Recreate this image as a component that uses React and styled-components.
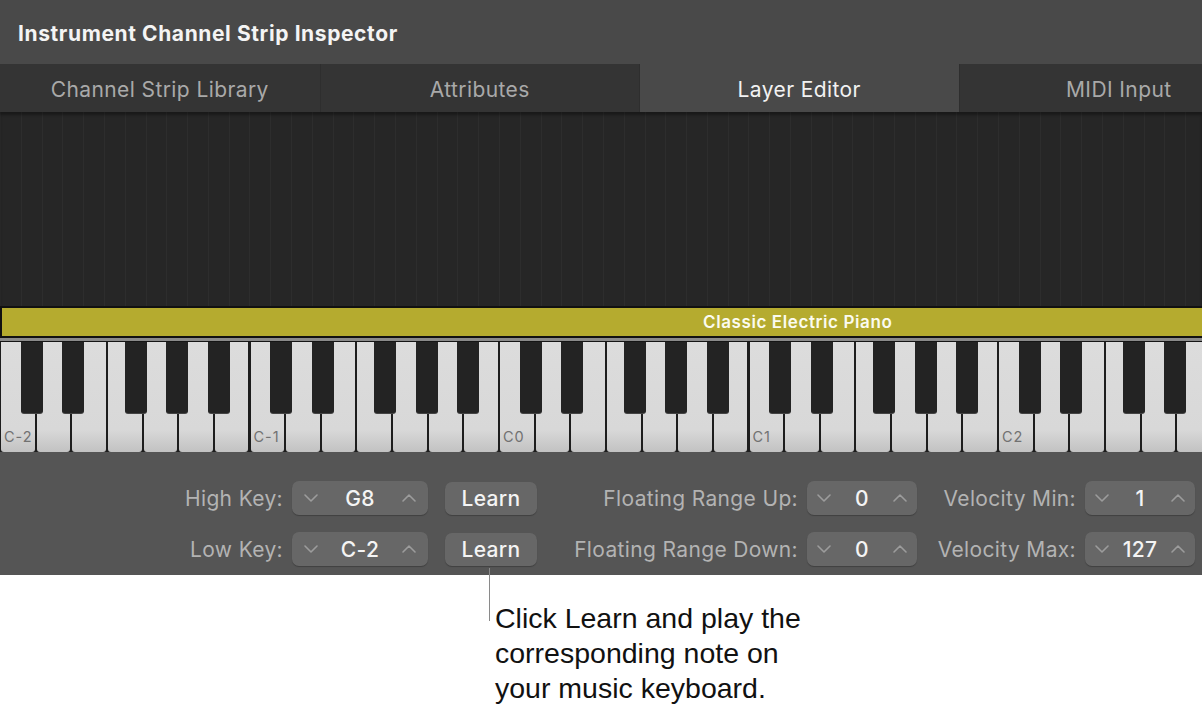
import React from "react";
import styled, { createGlobalStyle } from "styled-components";

const GlobalStyle = createGlobalStyle`
  * { box-sizing: border-box; }
  html, body, #root { margin: 0; padding: 0; }
  body {
    background: #fff;
    width: 1202px;
    height: 716px;
    overflow: hidden;
    font-family: Inter, "Noto Sans", sans-serif;
  }
`;

const TABS = ["Channel Strip Library", "Attributes", "Layer Editor", "MIDI Input"];
const OCTAVES = ["C-2", "C-1", "C0", "C1", "C2"];
const BLACK_KEYS = [1, 3, 6, 8, 10]; // semitone offsets
const SEMI = 249.5 / 12;

function Chevron({ up }) {
  return (
    <svg width="14" height="8" viewBox="0 0 14 8">
      <polyline
        points={up ? "1,7 7,1 13,7" : "1,1 7,7 13,1"}
        fill="none"
        stroke="#9c9c9c"
        strokeWidth="1.6"
        strokeLinecap="round"
        strokeLinejoin="round"
      />
    </svg>
  );
}

function Stepper({ value, wide }) {
  return (
    <StepBox $wide={wide}>
      <Chevron />
      <StepValue>{value}</StepValue>
      <Chevron up />
    </StepBox>
  );
}

export default function App() {
  return (
    <>
      <GlobalStyle />
      <Inspector>
        <TitleBar>Instrument Channel Strip Inspector</TitleBar>
        <TabBar>
          {TABS.map((t) => (
            <Tab key={t} $active={t === "Layer Editor"}>{t}</Tab>
          ))}
        </TabBar>

        <LayerArea />
        <LayerBar>
          <LayerName>Classic Electric Piano</LayerName>
        </LayerBar>
        <KeyDivider />

        <Keyboard>
          {OCTAVES.map((name) => (
            <Octave key={name}>
              {Array.from({ length: 7 }).map((_, i) => (
                <WhiteKey key={i}>{i === 0 && <KeyLabel>{name}</KeyLabel>}</WhiteKey>
              ))}
              {BLACK_KEYS.map((s) => (
                <BlackKey key={s} style={{ left: s * SEMI }} />
              ))}
            </Octave>
          ))}
        </Keyboard>

        <Controls>
          <Label>High Key:</Label>
          <Stepper value="G8" wide />
          <LearnButton>Learn</LearnButton>
          <Label>Floating Range Up:</Label>
          <Stepper value="0" />
          <Label>Velocity Min:</Label>
          <Stepper value="1" />

          <Label>Low Key:</Label>
          <Stepper value="C-2" wide />
          <LearnButton>Learn</LearnButton>
          <Label>Floating Range Down:</Label>
          <Stepper value="0" />
          <Label>Velocity Max:</Label>
          <Stepper value="127" />
        </Controls>
      </Inspector>

      <Callout>
        <CalloutLine />
        <CalloutText>
          Click Learn and play the
          <br />
          corresponding note on
          <br />
          your music keyboard.
        </CalloutText>
      </Callout>
    </>
  );
}

/* ===== styled ===== */
const Inspector = styled.div`
  width: 1202px;
  background: #555555;
  overflow: hidden;
`;

const TitleBar = styled.div`
  height: 64px;
  background: #494949;
  color: #f4f4f4;
  font-size: 21px;
  font-weight: 700;
  letter-spacing: 0.6px;
  display: flex;
  align-items: center;
  padding: 2px 18px 0;
`;

const TabBar = styled.div`
  height: 48px;
  display: flex;
  background: #343434;
  box-shadow: inset 0 1px 0 #2c2c2c;
  overflow: hidden;
`;

const Tab = styled.div`
  flex: 0 0 319.5px;
  display: flex;
  align-items: center;
  justify-content: center;
  font-size: 21px;
  letter-spacing: 0.4px;
  padding-top: 2px;
  color: ${(p) => (p.$active ? "#f2f2f2" : "#a9a9a9")};
  background: ${(p) => (p.$active ? "#494949" : "#343434")};
  border-left: 1px solid #2e2e2e;
  &:first-child { border-left: none; }
`;

const LayerArea = styled.div`
  height: 194px;
  background-color: #262626;
  background-image: repeating-linear-gradient(
    90deg,
    #2d2d2d 0px,
    #2d2d2d 1px,
    transparent 1px,
    transparent ${SEMI}px
  );
  box-shadow: inset 0 3px 3px rgba(0, 0, 0, 0.35);
`;

const LayerBar = styled.div`
  height: 32px;
  background: #b5ab2f;
  border: 2px solid #111;
  border-right: none;
  display: flex;
  align-items: center;
  padding-left: 701px;
`;

const LayerName = styled.span`
  color: #fbfbf0;
  font-size: 17px;
  font-weight: 600;
  letter-spacing: 0.6px;
`;

const KeyDivider = styled.div`
  height: 4px;
  background: #8a8a8a;
  border-bottom: 1px solid #151515;
`;

const Keyboard = styled.div`
  height: 110px;
  display: flex;
  overflow: hidden;
  background: #1d1d1d;
`;

const Octave = styled.div`
  position: relative;
  flex: 0 0 249.5px;
  display: flex;
`;

const WhiteKey = styled.div`
  position: relative;
  flex: 1;
  margin: 0 1px;
  background: linear-gradient(180deg, #dcdcdc 0%, #d8d8d8 80%, #c2c2c2 100%);
  border-radius: 0 0 3px 3px;
`;

const KeyLabel = styled.span`
  position: absolute;
  left: 3px;
  bottom: 7px;
  font-size: 14.5px;
  color: #717171;
  letter-spacing: 1px;
`;

const BlackKey = styled.div`
  position: absolute;
  top: 0;
  width: 22px;
  height: 71px;
  background: #232323;
  border-radius: 0 0 3px 3px;
  box-shadow: 0 1px 0 #444;
`;

const Controls = styled.div`
  display: grid;
  grid-template-columns: 283px 136px 100px 252px 110px 150px 110px;
  column-gap: 9px;
  row-gap: 17px;
  align-items: center;
  padding: 29px 0 9px;
`;

const Label = styled.div`
  justify-self: end;
  font-size: 21px;
  letter-spacing: 0.35px;
  color: #b3b3b3;
  white-space: nowrap;
`;

const StepBox = styled.div`
  height: 34px;
  border-radius: 7px;
  background: #676767;
  box-shadow: 0 1px 1px rgba(0, 0, 0, 0.25);
  display: flex;
  align-items: center;
  justify-content: space-between;
  padding: 0 ${(p) => (p.$wide ? "12px" : "10px")};
`;

const StepValue = styled.span`
  font-size: 21px;
  color: #f4f4f4;
  font-weight: 500;
  letter-spacing: 0.3px;
`;

const LearnButton = styled.div`
  justify-self: end;
  width: 92px;
  height: 33px;
  border-radius: 7px;
  background: #676767;
  box-shadow: 0 1px 1px rgba(0, 0, 0, 0.25);
  display: flex;
  align-items: center;
  justify-content: center;
  font-size: 21px;
  color: #f4f4f4;
  font-weight: 500;
  letter-spacing: 0.3px;
`;

const Callout = styled.div`
  display: flex;
  padding-left: 489px;
  margin-top: -7px;
`;

const CalloutLine = styled.div`
  width: 1px;
  height: 53px;
  background: #8a8a8a;
  flex-shrink: 0;
`;

const CalloutText = styled.p`
  margin: 33px 0 0 5px;
  font-family: "Liberation Sans", Arial, sans-serif;
  font-size: 28.5px;
  line-height: 35px;
  color: #111;
`;
